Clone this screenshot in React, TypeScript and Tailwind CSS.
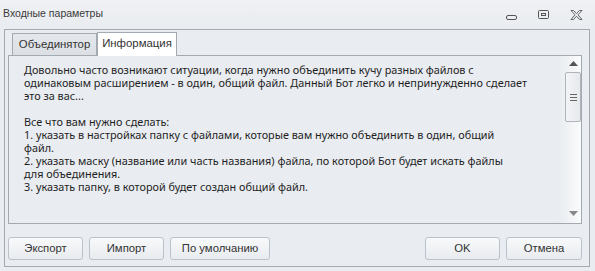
import React from "react";

const lines = [
  "Довольно часто возникают ситуации, когда нужно объединить кучу разных файлов с",
  "одинаковым расширением - в один, общий файл. Данный Бот легко и непринужденно сделает",
  "это за вас...",
  "",
  "Все что вам нужно сделать:",
  "1. указать в настройках папку с файлами, которые вам нужно объединить в один, общий",
  "файл.",
  "2. указать маску (название или часть названия) файла, по которой Бот будет искать файлы",
  "для объединения.",
  "3. указать папку, в которой будет создан общий файл.",
];

const ui = { fontFamily: '"Liberation Sans", Arial, sans-serif' };

function Btn({ label, w }: { label: string; w: string }) {
  return (
    <button
      style={ui}
      className={`${w} h-[23px] rounded-[3px] border border-[#bcc2ca] bg-gradient-to-b from-[#f8f9fa] to-[#e8ebef] text-[11.3px] text-[#333] flex items-center justify-center`}
    >
      {label}
    </button>
  );
}

export default function App() {
  return (
    <div
      className="w-[595px] h-[271px] bg-[#e9ecf0] flex flex-col overflow-hidden text-[#333]"
      style={ui}
    >
      {/* Title bar */}
      <div className="h-[29px] flex items-center pl-[3px] pr-[12px] bg-gradient-to-b from-[#eff1f4] to-[#e9ecf0]">
        <span className="text-[10.5px] text-[#3a3a3a] -mt-[1px]">Входные параметры</span>
        <div className="ml-auto flex items-center gap-[20px]">
          <svg width="12" height="12" viewBox="0 0 12 12" className="mt-[2px]">
            <rect x="0.5" y="5.5" width="10" height="4" rx="1.5" fill="none" stroke="#555" />
          </svg>
          <svg width="12" height="12" viewBox="0 0 12 12">
            <rect x="0.5" y="1.5" width="10" height="8" rx="1" fill="none" stroke="#555" />
            <rect x="3.5" y="4.5" width="4" height="2" fill="none" stroke="#555" />
          </svg>
          <svg width="13" height="12" viewBox="0 0 13 12">
            <path
              d="M1 1.5 L3.5 1.5 L6.5 4.5 L9.5 1.5 L12 1.5 L8 5.8 L12 10.5 L9.5 10.5 L6.5 7.2 L3.5 10.5 L1 10.5 L5 5.8 Z"
              fill="none"
              stroke="#555"
              strokeWidth="0.9"
              strokeLinejoin="round"
            />
          </svg>
        </div>
      </div>

      {/* Frame */}
      <div className="ml-[4px] mr-[5px] h-[238px] border border-[#a4aab2] pl-[3px] pr-[7px] pt-[2px] flex flex-col">
        {/* Tabs */}
        <div className="flex items-end h-[23px] pl-[4px] relative z-10">
          <div className="h-[22px] w-[85px] border border-b-0 border-[#a4aab2] bg-gradient-to-b from-[#e4e7eb] to-[#dcdfe4] text-[11.4px] flex items-center justify-center">
            Объединятор
          </div>
          <div className="h-[24px] w-[80px] border border-b-0 border-[#a4aab2] bg-white text-[11.4px] flex items-center justify-center -mb-[1px] pb-[2px]">
            Информация
          </div>
        </div>

        {/* Panel */}
        <div className="h-[169px] border border-[#a4aab2] bg-[#e9ecf0] flex overflow-hidden">
          <div
            className="flex-1 pl-[15px] pt-[7px] text-[10.85px] leading-[13px] text-[#1e1e1e] whitespace-pre overflow-hidden"
            style={{ fontFamily: '"Noto Sans", "Open Sans", sans-serif' }}
          >
            {lines.map((l, i) => (
              <div key={i} className="h-[13px]">
                {l}
              </div>
            ))}
          </div>
          <div className="w-[22px] flex flex-col items-end bg-gradient-to-r from-[#e9ecf0] to-[#fafbfc]">
            <div className="w-[16px] flex flex-col items-center pt-[5px] h-full">
              <svg width="9" height="5" viewBox="0 0 9 5" className="shrink-0">
                <path d="M0 5 L4.5 0 L9 5 Z" fill="#555" />
              </svg>
              <div className="mt-[6px] w-[16px] h-[50px] shrink-0 rounded-[2px] border border-[#aeb4bb] bg-gradient-to-r from-[#f3f4f6] to-[#e6e9ed] flex flex-col items-center justify-center gap-[2px]">
                <div className="w-[7px] h-[1px] bg-[#666]" />
                <div className="w-[7px] h-[1px] bg-[#666]" />
                <div className="w-[7px] h-[1px] bg-[#666]" />
              </div>
              <svg width="9" height="5" viewBox="0 0 9 5" className="mt-auto mb-[7px] shrink-0">
                <path d="M0 0 L9 0 L4.5 5 Z" fill="#888" />
              </svg>
            </div>
          </div>
        </div>

        {/* Buttons */}
        <div className="flex mt-[13px] gap-[6px]">
          <Btn label="Экспорт" w="w-[75px]" />
          <Btn label="Импорт" w="w-[75px]" />
          <Btn label="По умолчанию" w="w-[100px]" />
          <div className="flex-1" />
          <Btn label="OK" w="w-[75px]" />
          <Btn label="Отмена" w="w-[76px]" />
        </div>
      </div>
    </div>
  );
}
